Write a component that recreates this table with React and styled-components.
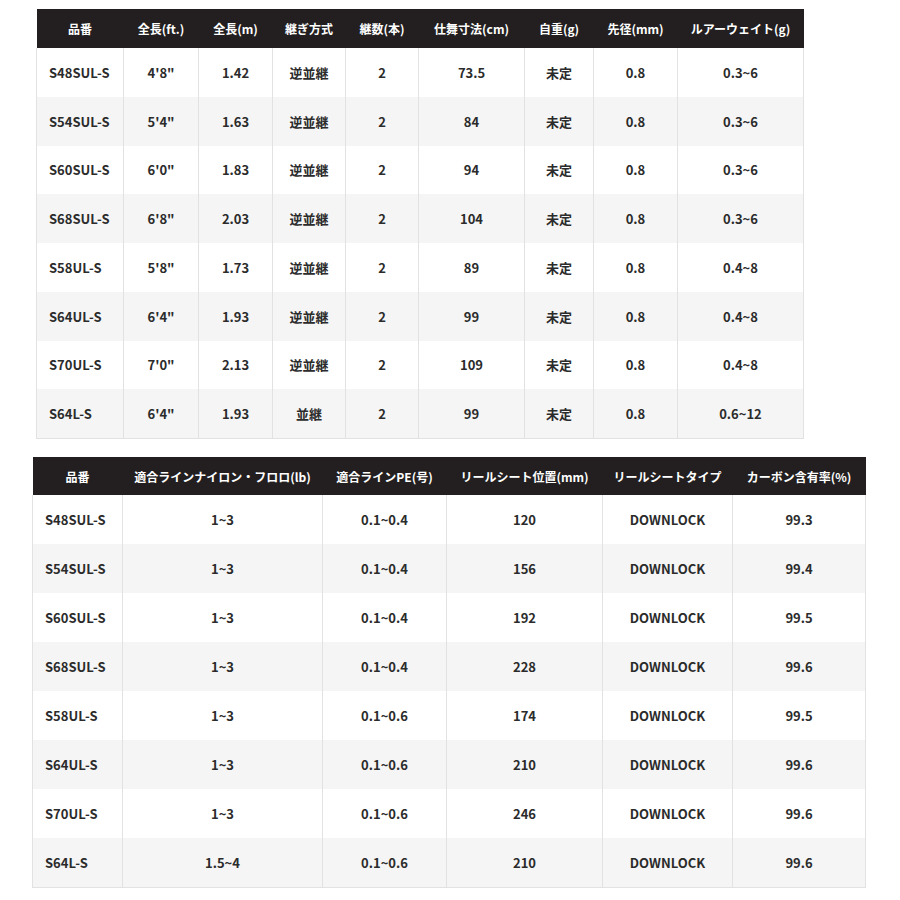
import React from "react";
import styled, { createGlobalStyle } from "styled-components";

const GlobalStyle = createGlobalStyle`
  body {
    margin: 0;
    background: #fff;
    font-family: "Noto Sans CJK JP", "Noto Sans", sans-serif;
  }
`;

const Page = styled.div`
  display: flex;
  flex-direction: column;
  gap: 18px;
  padding-top: 9px;
`;

const Table = styled.table`
  border-collapse: collapse;
  table-layout: fixed;
  margin-left: ${(p) => p.$left}px;
  width: ${(p) => p.$width}px;
  color: #2b2b2b;
  font-size: 13px;
  font-weight: 700;
`;

const HeadCell = styled.th`
  background: #231f20;
  color: #fff;
  height: ${(p) => p.$h}px;
  padding: 0;
  font-size: 12px;
  font-weight: 700;
  text-align: center;
  white-space: nowrap;
`;

const Row = styled.tr`
  background: ${(p) => (p.$alt ? "#f5f5f5" : "#fff")};
`;

const Cell = styled.td`
  height: ${(p) => p.$h}px;
  padding: 0;
  text-align: ${(p) => (p.$first ? "left" : "center")};
  padding-left: ${(p) => (p.$first ? "12px" : "0")};
  border-left: 1px solid #e2e2e2;
  border-right: 1px solid #e2e2e2;
  white-space: nowrap;
`;

const LastRow = styled(Row)`
  border-bottom: 1px solid #e2e2e2;
`;

const models = ["S48SUL-S", "S54SUL-S", "S60SUL-S", "S68SUL-S", "S58UL-S", "S64UL-S", "S70UL-S", "S64L-S"];

const specHead = ["品番", "全長(ft.)", "全長(m)", "継ぎ方式", "継数(本)", "仕舞寸法(cm)", "自重(g)", "先径(mm)", "ルアーウェイト(g)"];
const specCols = [87, 75, 74, 73, 73, 106, 69, 84, 126];
const specRows = [
  ["4'8\"", "1.42", "逆並継", "2", "73.5", "未定", "0.8", "0.3~6"],
  ["5'4\"", "1.63", "逆並継", "2", "84", "未定", "0.8", "0.3~6"],
  ["6'0\"", "1.83", "逆並継", "2", "94", "未定", "0.8", "0.3~6"],
  ["6'8\"", "2.03", "逆並継", "2", "104", "未定", "0.8", "0.3~6"],
  ["5'8\"", "1.73", "逆並継", "2", "89", "未定", "0.8", "0.4~8"],
  ["6'4\"", "1.93", "逆並継", "2", "99", "未定", "0.8", "0.4~8"],
  ["7'0\"", "2.13", "逆並継", "2", "109", "未定", "0.8", "0.4~8"],
  ["6'4\"", "1.93", "並継", "2", "99", "未定", "0.8", "0.6~12"],
];

const lineHead = ["品番", "適合ラインナイロン・フロロ(lb)", "適合ラインPE(号)", "リールシート位置(mm)", "リールシートタイプ", "カーボン含有率(%)"];
const lineCols = [90, 200, 124, 156, 130, 133];
const lineRows = [
  ["1~3", "0.1~0.4", "120", "DOWNLOCK", "99.3"],
  ["1~3", "0.1~0.4", "156", "DOWNLOCK", "99.4"],
  ["1~3", "0.1~0.4", "192", "DOWNLOCK", "99.5"],
  ["1~3", "0.1~0.4", "228", "DOWNLOCK", "99.6"],
  ["1~3", "0.1~0.6", "174", "DOWNLOCK", "99.5"],
  ["1~3", "0.1~0.6", "210", "DOWNLOCK", "99.6"],
  ["1~3", "0.1~0.6", "246", "DOWNLOCK", "99.6"],
  ["1.5~4", "0.1~0.6", "210", "DOWNLOCK", "99.6"],
];

function SpecTable({ head, cols, rows, left, headHeight, rowHeight }) {
  const width = cols.reduce((a, b) => a + b, 0);
  return (
    <Table $left={left} $width={width}>
      <colgroup>
        {cols.map((w, i) => (
          <col key={i} style={{ width: w }} />
        ))}
      </colgroup>
      <thead>
        <tr>
          {head.map((h) => (
            <HeadCell key={h} $h={headHeight}>{h}</HeadCell>
          ))}
        </tr>
      </thead>
      <tbody>
        {rows.map((r, i) => {
          const R = i === rows.length - 1 ? LastRow : Row;
          return (
            <R key={i} $alt={i % 2 === 1}>
              <Cell $first $h={rowHeight}>{models[i]}</Cell>
              {r.map((v, j) => (
                <Cell key={j} $h={rowHeight}>{v}</Cell>
              ))}
            </R>
          );
        })}
      </tbody>
    </Table>
  );
}

export default function App() {
  return (
    <>
      <GlobalStyle />
      <Page>
        <SpecTable head={specHead} cols={specCols} rows={specRows} left={36} headHeight={39} rowHeight={48.75} />
        <SpecTable head={lineHead} cols={lineCols} rows={lineRows} left={32} headHeight={38} rowHeight={49} />
      </Page>
    </>
  );
}
